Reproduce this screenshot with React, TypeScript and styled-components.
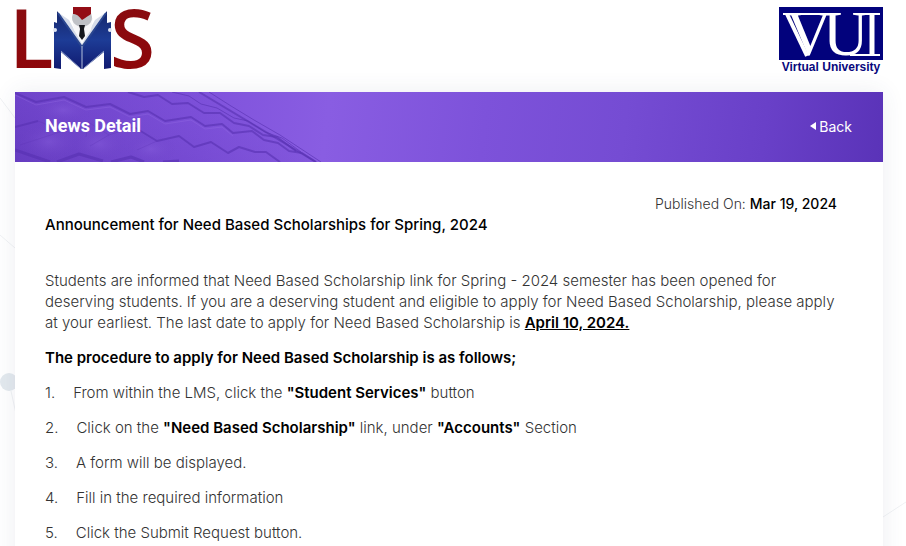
import React from "react";
import styled, { createGlobalStyle } from "styled-components";

const GlobalStyle = createGlobalStyle`
  * { box-sizing: border-box; }
  html { height: 100%; overflow: hidden; }
  body {
    margin: 0;
    background: #fff;
    color: #333;
    font: 300 15px/21px Inter, "Noto Sans", sans-serif;
  }
`;

const Page = styled.div`
  position: relative;
  height: 100vh;
  overflow: hidden;
  padding: 0 23px 0 15px;
`;

const Backdrop = styled.svg`
  position: absolute;
  left: 0;
  bottom: 0;
  width: 100%;
  height: 100%;
`;

const TopBar = styled.header`
  position: relative;
  display: flex;
  justify-content: space-between;
  align-items: flex-start;
  height: 92px;
  padding-top: 6px;
`;

const LogoLink = styled.a`
  display: block;
  svg { display: block; overflow: visible; }
`;

const Card = styled.main`
  position: relative;
  min-height: 100vh;
  background: #fff;
  box-shadow: 0 0 22px rgba(60, 70, 110, 0.09);
`;

const Banner = styled.div`
  position: relative;
  display: flex;
  align-items: center;
  justify-content: space-between;
  height: 70px;
  padding: 0 31px 2px 30px;
  background: linear-gradient(97deg, #7549d0 0%, #8053dc 22%, #895de2 36%, #7d52da 54%, #754cd3 70%, #6940c8 86%, #5a33b8 100%);
`;

const Honeycomb = styled.svg`
  position: absolute;
  left: 0;
  top: 0;
`;

const BannerTitle = styled.h1`
  position: relative;
  margin: 0;
  color: #fff;
  font: 700 18px/24px Roboto, sans-serif;
`;

const BackLink = styled.a`
  display: flex;
  align-items: center;
  gap: 3px;
  color: #fff;
  font-size: 14px;
  font-weight: 400;
  text-decoration: none;
`;

const Article = styled.article`
  padding: 31px 30px;
`;

const Published = styled.div`
  padding-right: 16px;
  font-size: 14px;
  text-align: right;
  time { color: #000; font-weight: 500; }
`;

const Subject = styled.h2`
  margin: 0 0 35px;
  color: #000;
  font-size: 15px;
  font-weight: 500;
  line-height: 21px;
`;

const Paragraph = styled.p`
  margin: 0 0 14px;
  padding-right: 12px;
`;

const Strong = styled.strong<{ $underlined?: boolean }>`
  color: #000;
  font-weight: 600;
  text-decoration: ${(p) => (p.$underlined ? "underline" : "none")};
`;

const Steps = styled.ol`
  display: grid;
  gap: 14px;
  margin: 0;
  padding: 0;
  list-style: none;
`;

const Step = styled.li`
  display: flex;
  gap: 18px;
`;

const LmsLogo = () => (
  <svg width="140" height="66" viewBox="15 6 140 66" role="img" aria-label="LMS">
    <defs>
      <linearGradient id="red" x1="0" y1="0" x2="0" y2="1">
        <stop offset="0" stopColor="#870d12" />
        <stop offset="1" stopColor="#8f0609" />
      </linearGradient>
      <linearGradient id="cover" x1="0" y1="0" x2="0" y2="1">
        <stop offset="0" stopColor="#16276b" />
        <stop offset="0.5" stopColor="#1d3c96" />
        <stop offset="1" stopColor="#101a70" />
      </linearGradient>
    </defs>
    <g fill="url(#red)" fontFamily="Open Sans" fontWeight="600" fontSize="82">
      <text x="9" y="68">L</text>
      <text x="110" y="68">S</text>
    </g>
    <path d="M54 22 L57 23 V11 L82 45 L107 11 V23 L111 22 V68 L104 69 L104 52 L83 69 H81 L61 52 L61 69 L54 68Z" fill="url(#cover)" />
    <path d="M59 13 L69 20 L82 44 L95 20 L105 13 L82 47Z" fill="#d6dce9" />
    <path d="M58 13 L82 47 L106 13" fill="none" stroke="#2a4690" strokeWidth="2" />
    <path d="M72 18 H93 L91 30 L82 42 L74 30Z" fill="#f7f7f9" />
    <path d="M82 46 V69" stroke="#b4c0dc" strokeWidth="1" />
    <path d="M61 51 L80 68 M104 51 L84 68" stroke="#8b9bc6" strokeWidth="1" />
    <path d="M73 13 H91 Q94 21 88 25 L82 28 L76 25 Q70 21 73 13Z" fill="#bfc1c6" />
    <path d="M73 7 H91 V14 Q88 16 82 20 Q77 13 73 14Z" fill="#930d16" />
    <path d="M79 25 H85 L84 29 L85 36 L82 40 L79 36 L80 29Z" fill="#15171d" />
    <circle cx="55" cy="30" r="2" fill="#dfe5f3" />
    <circle cx="110" cy="30" r="2" fill="#dfe5f3" />
  </svg>
);

const VuLogo = () => (
  <svg width="104" height="68" viewBox="779 6 104 68" role="img" aria-label="VU Virtual University">
    <rect x="779" y="7" width="104" height="53" fill="#02027c" />
    <g fill="#fff" fontFamily="Liberation Serif" fontSize="63">
      <text x="786" y="55">V</text>
      <text x="823" y="55">U</text>
    </g>
    <path d="M787 14 L807 56" stroke="#fff" strokeWidth="4" fill="none" />
    <path d="M783 14 H832" stroke="#fff" strokeWidth="2" />
    <path d="M872 14 V55" stroke="#fff" strokeWidth="5" />
    <path d="M864 14 H880 M850 55 H880" stroke="#fff" strokeWidth="2" />
    <text x="831" y="71" textAnchor="middle" fill="#08087c" fontFamily="Liberation Sans" fontWeight="700" fontSize="12">
      Virtual University
    </text>
  </svg>
);

const HoneycombArt = () => (
  <Honeycomb width="320" height="70" viewBox="0 0 320 70" aria-hidden="true">
    <defs>
      <linearGradient id="shade" x1="0" y1="1" x2="1" y2="0.4">
        <stop offset="0" stopColor="#4e29a8" stopOpacity="0.4" />
        <stop offset="1" stopColor="#7044cf" stopOpacity="0.1" />
      </linearGradient>
      <radialGradient id="cell">
        <stop offset="0" stopColor="#8b62df" stopOpacity="0.4" />
        <stop offset="1" stopColor="#6b40c5" stopOpacity="0" />
      </radialGradient>
    </defs>
    <path d="M0 0 H184 L301 70 H0Z" fill="url(#shade)" />
    <g fill="url(#cell)">
      <ellipse cx="34" cy="50" rx="32" ry="20" />
      <ellipse cx="84" cy="52" rx="28" ry="18" />
      <ellipse cx="136" cy="57" rx="26" ry="15" />
      <ellipse cx="48" cy="18" rx="30" ry="14" />
    </g>
    <g fill="none" stroke="#5630b0" strokeLinejoin="round" strokeOpacity="0.6">
      <path strokeWidth="2" d="M0 1 L21 10 L49 5 L71 15 L95 12 L115 22 L133 19 L150 29 L176 25 L190 34 L207 32 L218 41 L237 39 L249 48 L263 51 L274 59 L287 61 L301 70" />
      <path strokeWidth="2" d="M0 35 L23 29 M119 35 L142 49 L164 44 L179 55 L196 50 L213 61 L224 55 L240 60 L251 60 L265 70" />
      <path strokeWidth="3" d="M0 58 L35 70 M42 70 L64 62 L88 69 M96 70 L116 65 L129 70 M148 70 L164 69" />
      <path strokeWidth="2" d="M113 0 L129 5 L143 3 L157 12 L173 11 L189 21 L205 21 L219 31 L234 34 L248 43 L262 45 L281 59" />
      <path strokeWidth="1" d="M157 0 L174 4 L186 12 L202 16 L219 26 L233 29 L250 40 L267 46 L286 60" />
      <path strokeWidth="2" d="M184 0 L301 70" />
      <path strokeWidth="1" d="M194 0 L216 14 L239 28 L265 43 L306 70" />
    </g>
    <g fill="none" stroke="#5630b0" strokeOpacity="0.25">
      <path d="M23 29 L48 39 L73 30 L94 43 L119 35 M48 39 L5 53 M73 30 L71 45 M94 43 L75 54 M142 49 L122 58" />
    </g>
    <g fill="none" stroke="#9b73e9" strokeOpacity="0.3">
      <path d="M0 3 L21 13 L49 8 L71 18 L95 15 L115 25 L133 22 L150 32 L176 28 L190 37 L207 35 L218 44" />
    </g>
  </Honeycomb>
);

const steps: React.ReactNode[] = [
  <>From within the LMS, click the <Strong>"Student Services"</Strong> button</>,
  <>Click on the <Strong>"Need Based Scholarship"</Strong> link, under <Strong>"Accounts"</Strong> Section</>,
  "A form will be displayed.",
  "Fill in the required information",
  "Click the Submit Request button.",
];

export default function App() {
  return (
    <>
      <GlobalStyle />
      <Page>
        <Backdrop viewBox="0 0 906 546" preserveAspectRatio="none" aria-hidden="true">
          <circle cx="9" cy="382" r="9" fill="#e3e9ee" />
          <path d="M0 98 L15 118 M0 235 L15 248 M11 391 L20 432 M883 517 L906 502" stroke="#f0f2f4" fill="none" />
        </Backdrop>
        <TopBar>
          <LogoLink href="#lms"><LmsLogo /></LogoLink>
          <LogoLink href="#vu"><VuLogo /></LogoLink>
        </TopBar>
        <Card>
          <Banner>
            <HoneycombArt />
            <BannerTitle>News Detail</BannerTitle>
            <BackLink href="#back">
              <svg width="6" height="8" viewBox="0 0 6 8" aria-hidden="true">
                <path d="M6 0 V8 L0 4Z" fill="#fff" />
              </svg>
              Back
            </BackLink>
          </Banner>
          <Article>
            <Published>Published On: <time dateTime="2024-03-19">Mar 19, 2024</time></Published>
            <Subject>Announcement for Need Based Scholarships for Spring, 2024</Subject>
            <Paragraph>
              Students are informed that Need Based Scholarship link for Spring - 2024 semester has been opened for
              deserving students. If you are a deserving student and eligible to apply for Need Based Scholarship, please apply
              at your earliest. The last date to apply for Need Based Scholarship is <Strong $underlined>April 10, 2024.</Strong>
            </Paragraph>
            <Paragraph><Strong>The procedure to apply for Need Based Scholarship is as follows;</Strong></Paragraph>
            <Steps>
              {steps.map((step, i) => (
                <Step key={i}><span>{i + 1}.</span><div>{step}</div></Step>
              ))}
            </Steps>
          </Article>
        </Card>
      </Page>
    </>
  );
}
